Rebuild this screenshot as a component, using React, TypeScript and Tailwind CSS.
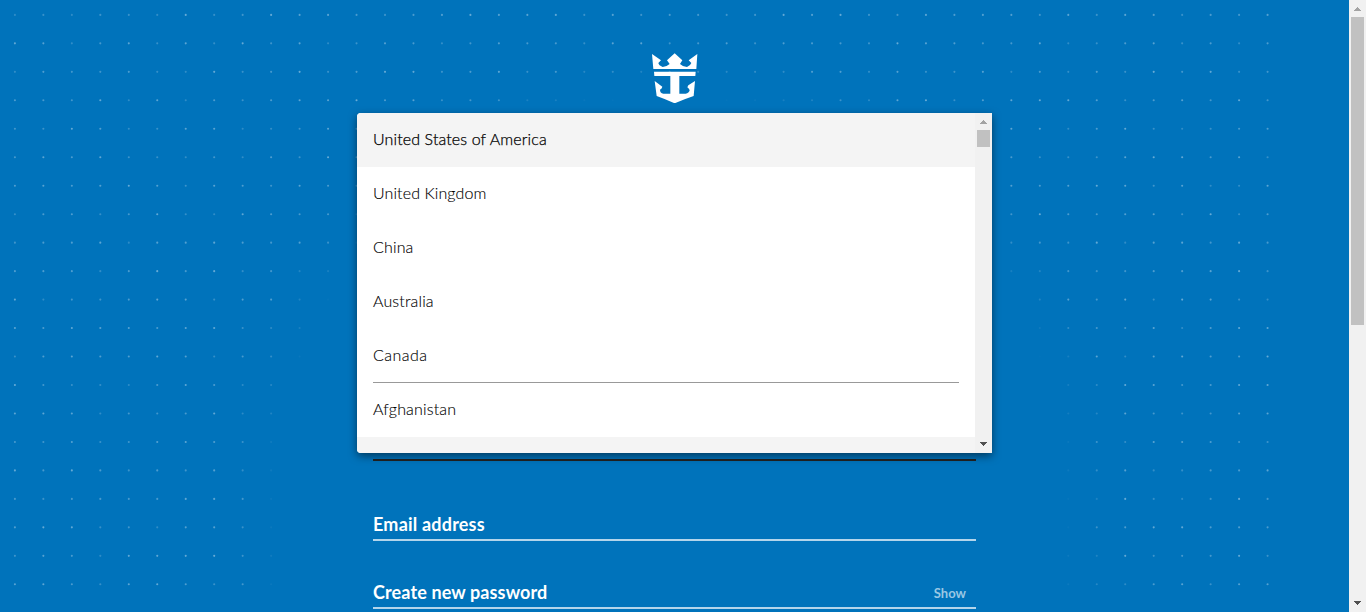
const PITCH = 28.47;

function dots() {
  const out: { x: number; y: number; o: number }[] = [];
  for (let r = 0; r < 21; r++) {
    for (let c = 0; c < 45; c++) {
      const x = 14.9 + c * PITCH;
      const y = 14.9 + r * PITCH;
      // Fade towards the centre column: a circular cap with straight sides below it
      const d = Math.hypot(x - 672, Math.min(y - 490, 0));
      const fade = Math.max(0, Math.min(1, (d - 388) / 62));
      const n = Math.sin(r * 12.9898 + c * 78.233) * 43758.5453;
      const o = (0.18 + 0.22 * (n - Math.floor(n))) * fade;
      if (o > 0.01) out.push({ x, y, o });
    }
  }
  return out;
}

const DOTS = dots();

function Logo() {
  return (
    <svg className="block h-[50px] w-[46px]" viewBox="35 23 138 150" fill="#fff">
      <path d="M35 26 L62 45 L54 53 Q55 60 67 65 Q80 63 88 56 L80 45 L103 24 L126 45 L119 56 Q126 63 140 65 Q151 60 153 53 L145 45 L171 26 L168 71 L39 71 Z" />
      <path d="M41 79 H166 L165 92 H117 V145 H136 Q146 144 148 135 Q147 131 141 126 L144 120 L164 107 L160 152 Q130 162 103 174 Q77 162 49 152 L43 107 L66 124 Q65 130 59 133 Q59 143 69 145 H90 V92 H42 Z" />
    </svg>
  );
}

function Arrow({ up = false, className }: { up?: boolean; className: string }) {
  return (
    <svg className={`block h-4 w-[7px] ${className}`} viewBox="0 0 7 16" shapeRendering="crispEdges" fill="currentColor">
      {up ? <path d="M3 6h1v1h1v1h1v1h1v1H0V9h1V8h1V7h1z" /> : <path d="M0 6h7v1H6v1H5v1H4v1H3V9H2V8H1V7H0z" />}
    </svg>
  );
}

const COUNTRIES = [
  { name: "United States of America", cls: "bg-[#f4f4f4] tracking-[0.12px] [-webkit-text-stroke:0.25px_black]" },
  { name: "United Kingdom", cls: "tracking-[0.11px] [-webkit-text-stroke:0.12px_black]" },
  { name: "China", cls: "tracking-[0.15px] [-webkit-text-stroke:0.12px_black]" },
  { name: "Australia", cls: "tracking-[0.15px] [-webkit-text-stroke:0.12px_black]" },
  { name: "Canada", cls: "tracking-[0.48px] [-webkit-text-stroke:0.12px_black]" },
  { name: "Afghanistan", cls: "tracking-[0.17px] [-webkit-text-stroke:0.12px_black]" },
];

function CountryMenu() {
  return (
    <div className="relative z-10 flex h-[340px] w-[635px] overflow-hidden rounded-l shadow-[0_3px_8px_rgba(0,0,0,0.5)]">
      <div className="min-w-0 flex-1 overflow-hidden bg-white">
        {COUNTRIES.map((c) => (
          <div key={c.name} className={`relative flex h-[54px] items-center px-4 pb-0.5 text-base font-light text-black ${c.cls}`}>
            <span>{c.name}</span>
            {c.name === "Canada" && <span className="absolute inset-x-4 bottom-0 h-px bg-[#999]" />}
          </div>
        ))}
        <div className="h-[54px] bg-[#f4f4f4]" />
      </div>
      <div className="flex w-[17px] flex-col items-center bg-[#f1f1f1]">
        <Arrow up className="mt-px text-[#a3a3a3]" />
        <div className="h-[17px] w-[13px] bg-[#c1c1c1]" />
        <Arrow className="mt-auto mb-px text-[#505050]" />
      </div>
    </div>
  );
}

export default function App() {
  return (
    <div className="flex h-[612px] w-[1366px] overflow-hidden bg-[#0073bb] font-['Lato','Open_Sans',sans-serif]">
      <main className="relative flex h-full w-[1349px] flex-col items-center">
        <svg className="absolute inset-0 h-full w-full" viewBox="0 0 1349 612" fill="#fff">
          {DOTS.map((d, i) => (
            <circle key={i} cx={d.x} cy={d.y} r="1.05" opacity={d.o} />
          ))}
        </svg>
        <div className="relative pt-[53px] pb-[10px]">
          <Logo />
        </div>
        <CountryMenu />
        <form className="relative w-[603px] text-[18px] font-bold text-white">
          <div className="h-2 border-b-2 border-[#222]" />
          <div className="flex h-20 items-end border-b-2 border-[#b3d5eb] pb-[3px]">
            <label className="leading-6 tracking-[0.2px]">Email address</label>
          </div>
          <div className="flex h-[68px] items-end justify-between border-b-2 border-[#b3d5eb] pb-[3px]">
            <label className="leading-6 tracking-[0.12px]">Create new password</label>
            <span className="mr-[10px] text-[13px] leading-[22px] text-[#99c7e4]">Show</span>
          </div>
        </form>
      </main>
      <div className="flex h-full w-[17px] flex-col items-center bg-[#f1f1f1]">
        <Arrow up className="mt-px text-[#a3a3a3]" />
        <div className="h-[308px] w-[13px] bg-[#c1c1c1]" />
        <Arrow className="mt-auto mb-px text-[#505050]" />
      </div>
    </div>
  );
}
